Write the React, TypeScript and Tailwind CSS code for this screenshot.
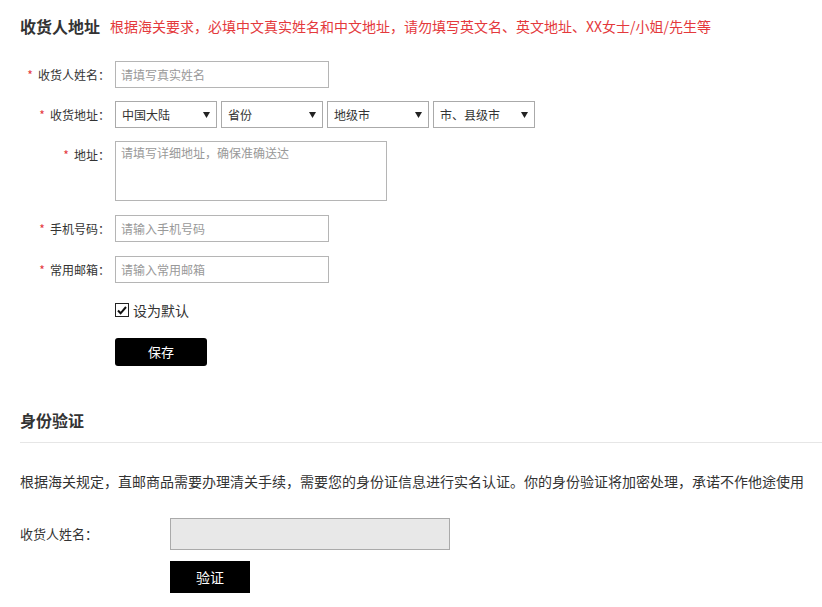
import { useState } from 'react';

const FONT = "font-['Noto_Sans_CJK_SC','Noto_Sans',sans-serif]";

const regions = [
  { id: 'country', value: '中国大陆' },
  { id: 'province', value: '省份' },
  { id: 'city', value: '地级市' },
  { id: 'county', value: '市、县级市' },
];

function Label({ text, className = '' }: { text: string; className?: string }) {
  return (
    <label className={`w-[90px] shrink-0 text-right text-[12px] leading-[20px] text-[#333] ${className}`}>
      <span className="mr-[5px] text-[#e4393c]">*</span>
      {text}：
    </label>
  );
}

function Caret() {
  return (
    <svg width="7" height="6" viewBox="0 0 7 6" className="pointer-events-none absolute right-[7px] top-[11px]">
      <path d="M0 0h7L3.5 6z" fill="#222" />
    </svg>
  );
}

export default function App() {
  const [isDefault, setIsDefault] = useState(true);

  return (
    <div className={`${FONT} min-h-[607px] bg-white pl-[20px] pt-[14px] text-[#333]`}>
      {/* 收货人地址 */}
      <div className="flex h-[24px] items-center">
        <h2 className="text-[16px] font-bold leading-[24px] text-[#333]">收货人地址</h2>
        <p className="ml-[10px] text-[14px] leading-[24px] text-[#e4393c]">
          根据海关要求，必填中文真实姓名和中文地址，请勿填写英文名、英文地址、XX女士/小姐/先生等
        </p>
      </div>

      <div className="mt-[23px] flex flex-col">
        <div className="flex h-[27px] items-center">
          <Label text="收货人姓名" />
          <input
            className="ml-[5px] h-[27px] w-[214px] border border-[#b5b5b5] px-[5px] text-[12px] text-[#333] outline-none placeholder:text-[#999]"
            placeholder="请填写真实姓名"
          />
        </div>

        <div className="mt-[13px] flex h-[27px] items-center">
          <Label text="收货地址" />
          <div className="ml-[5px] flex gap-[4px]">
            {regions.map((r) => (
              <div key={r.id} className="relative">
                <select
                  defaultValue={r.value}
                  className="h-[27px] w-[102px] appearance-none border border-[#aaa] bg-white pl-[6px] text-[12px] text-[#333] outline-none"
                >
                  <option>{r.value}</option>
                </select>
                <Caret />
              </div>
            ))}
          </div>
        </div>

        <div className="mt-[13px] flex items-start">
          <Label text="地址" className="pt-[4px]" />
          <textarea
            className="ml-[5px] h-[60px] w-[272px] resize-none border border-[#b5b5b5] px-[5px] py-[2px] text-[12px] leading-[18px] text-[#333] outline-none placeholder:text-[#999]"
            placeholder="请填写详细地址，确保准确送达"
          />
        </div>

        <div className="mt-[14px] flex h-[27px] items-center">
          <Label text="手机号码" />
          <input
            className="ml-[5px] h-[27px] w-[214px] border border-[#b5b5b5] px-[5px] text-[12px] text-[#333] outline-none placeholder:text-[#999]"
            placeholder="请输入手机号码"
          />
        </div>

        <div className="mt-[14px] flex h-[27px] items-center">
          <Label text="常用邮箱" />
          <input
            className="ml-[5px] h-[27px] w-[214px] border border-[#b5b5b5] px-[5px] text-[12px] text-[#333] outline-none placeholder:text-[#999]"
            placeholder="请输入常用邮箱"
          />
        </div>

        <label
          className="ml-[95px] mt-[20px] flex h-[14px] cursor-pointer items-center"
          onClick={() => setIsDefault(!isDefault)}
        >
          <span className="flex h-[14px] w-[14px] items-center justify-center border border-[#222] bg-white">
            {isDefault && (
              <svg width="10" height="9" viewBox="0 0 10 9">
                <path d="M1 4.5l2.6 2.8L9 1" fill="none" stroke="#111" strokeWidth="2" />
              </svg>
            )}
          </span>
          <span className="ml-[4px] text-[14px] leading-[20px] text-[#333]">设为默认</span>
        </label>

        <button className="ml-[95px] mt-[21px] h-[28px] w-[92px] rounded-[3px] bg-black text-[13px] text-white">
          保存
        </button>
      </div>

      {/* 身份验证 */}
      <h2 className="mt-[42px] text-[16px] font-bold leading-[24px] text-[#333]">身份验证</h2>
      <div className="mt-[10px] border-t border-[#e6e6e6]" />
      <p className="mt-[28px] text-[14px] leading-[20px] text-[#333]">
        根据海关规定，直邮商品需要办理清关手续，需要您的身份证信息进行实名认证。你的身份验证将加密处理，承诺不作他途使用
      </p>

      <div className="mt-[27px] flex h-[32px] items-center">
        <span className="w-[150px] shrink-0 text-[13px] leading-[20px] text-[#333]">收货人姓名：</span>
        <input
          disabled
          className="h-[32px] w-[280px] border border-[#aaa] bg-[#e8e8e8] px-[6px] text-[13px]"
        />
      </div>
      <button className="ml-[150px] mt-[11px] h-[32px] w-[80px] bg-black text-[14px] text-white">验证</button>
    </div>
  );
}
